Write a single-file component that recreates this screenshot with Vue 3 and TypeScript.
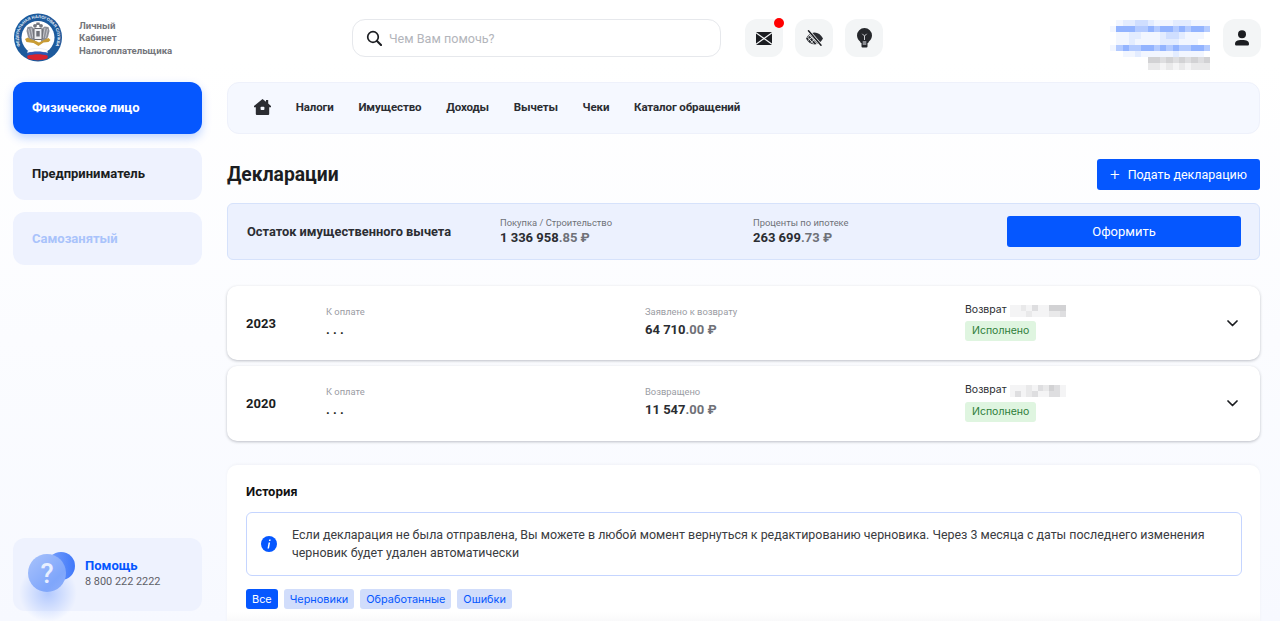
<template>
  <div class="page">
    <header class="top">
      <div class="brand">
        <svg class="logo" viewBox="0 0 48 50" width="48" height="50">
          <defs>
            <path id="ring" d="M7.500 35 A19.500 19.500 0 1 1 40.500 35" />
          </defs>
          <circle cx="24" cy="24.500" r="24" fill="#1d5a9c" />
          <circle cx="24" cy="24.500" r="16.500" fill="#fff" />
          <text class="logo-text"><textPath href="#ring" startOffset="50%" text-anchor="middle">ФЕДЕРАЛЬНАЯ НАЛОГОВАЯ СЛУЖБА</textPath></text>
          <!-- eagle: wings, heads, shield -->
          <path d="M20.500 16l-3-2.500-4 .5-1 4 1.500 6 2.500 4 4.500 1.500z" fill="#8b8e96" />
          <path d="M27.500 16l3-2.500 4 .5 1 4-1.500 6-2.500 4-4.500 1.500z" fill="#8b8e96" />
          <path d="M14.500 16l2 9M17 15l2 10M33.500 16l-2 9M31 15l-2 10" stroke="#dcdee3" stroke-width=".7" />
          <circle cx="21" cy="12.800" r="1.900" fill="#74777f" />
          <circle cx="27" cy="12.800" r="1.900" fill="#74777f" />
          <path d="M22.500 9.500h3l.5 2.500h-4z" fill="#74777f" />
          <rect x="20" y="15.500" width="8" height="11" rx="1" fill="#eceef1" stroke="#55575e" stroke-width=".9" />
          <rect x="22.300" y="18" width="3.400" height="5.500" fill="#6d7078" />
          <!-- key -->
          <path d="M11 26l3-1.500 2 1.500 6 2 3 1.500 7-3.500 2.500-1 2 2-2 2-5 .5-5 3.500-5-3-7-1z" fill="#c99c34" />
          <!-- flag ribbon -->
          <path d="M14 37c6-2.200 13-2.200 19 0l.5 3c-6-2-14-2-20 0z" fill="#fff" stroke="#d5dbe6" stroke-width=".4" />
          <path d="M13.500 40c6-2 14-2 20 0l.3 2.800c-6-2-14-2-20.500 0z" fill="#2f58b5" />
          <path d="M13.300 42.800c6.500-2 14.500-2 20.500 0l-.3 2.700c-6 2.300-14 2.300-20 0z" fill="#d8232f" />
        </svg>
        <div class="brand-text">Личный<br />Кабинет<br />Налогоплательщика</div>
      </div>

      <div class="search">
        <svg width="16" height="16" viewBox="0 0 16 16" fill="none" stroke="#1b1d21" stroke-width="1.700">
          <circle cx="7" cy="7" r="5.300" />
          <path d="M11 11l4 4" stroke-width="2.200" stroke-linecap="round" />
        </svg>
        <span>Чем Вам помочь?</span>
      </div>

      <div class="actions">
        <button class="icon-btn">
          <svg width="16" height="13" viewBox="0 0 16 13">
            <rect width="16" height="13" rx="1" fill="#1b1d21" />
            <path d="M0 .8L16 12.200M16 .8L0 12.200" fill="none" stroke="#f3f5f6" stroke-width="1.200" />
          </svg>
          <i class="dot"></i>
        </button>
        <button class="icon-btn">
          <svg width="19" height="16" viewBox="0 0 19 16">
            <path d="M1 8.500c2-3.800 5-6 8.500-6s6.500 2.200 8.500 6c-2 3.800-5 6-8.500 6S3 12.300 1 8.500z" fill="#2b2d32" />
            <path d="M2.500 7l6.500 7.500M4.500 5.200l8 9.300M7 4l-3.800 2.500M3 10.500l6-5M5.500 13l5.500-5" stroke="#f3f5f6" stroke-width=".9" />
            <path d="M3.500 .8l12.500 14.400" stroke="#f3f5f6" stroke-width="3" />
            <path d="M3.500 .8l12.500 14.400" stroke="#1b1d21" stroke-width="1.500" stroke-linecap="round" />
          </svg>
        </button>
        <button class="icon-btn">
          <svg width="15" height="20" viewBox="0 0 15 20">
            <path d="M7.500 0a7.500 7.500 0 0 1 7.500 7.500c0 2.800-1.500 4.300-2.800 5.800-.7.800-.9 1.300-.9 1.700H3.700c0-.4-.2-.9-.9-1.700C1.500 11.800 0 10.300 0 7.500A7.500 7.500 0 0 1 7.500 0z" fill="#25272b" />
            <path d="M5.300 5.800l2.200 2.200 2.200-2.200M7.500 8v6" fill="none" stroke="#c9cbd0" stroke-width="1" />
            <rect x="4.500" y="12" width="6" height="7.500" rx="1" fill="#25272b" />
            <rect x="5.700" y="13" width="3.600" height="4" fill="#8a8c91" />
          </svg>
        </button>
      </div>

      <div class="profile">
        <div class="pix pix-blue">
          <i
            v-for="(cell, i) in profileCells"
            :key="i"
            :style="{ background: cell }"
          ></i>
        </div>
        <button class="icon-btn">
          <svg width="16" height="16" viewBox="0 0 16 16" fill="#1b1d21">
            <circle cx="8" cy="4.200" r="4" />
            <path d="M1 14c0-2.600 2-4 7-4s7 1.400 7 4c0 1-.6 1.600-1.600 1.600H2.600C1.600 15.600 1 15 1 14z" />
          </svg>
        </button>
      </div>
    </header>

    <div class="body">
      <aside class="side">
        <a class="side-item active">Физическое лицо</a>
        <a class="side-item second">Предприниматель</a>
        <a class="side-item muted">Самозанятый</a>
        <div class="help">
          <div class="help-icon">
            <i class="glow"></i>
            <i class="back"></i>
            <i class="front">?</i>
          </div>
          <div>
            <div class="help-title">Помощь</div>
            <div class="help-phone">8 800 222 2222</div>
          </div>
        </div>
      </aside>

      <main class="main">
        <nav class="nav">
          <svg width="17" height="16" viewBox="0 0 17 16">
            <path d="M8.500 0L12 2.800V1h2.200v3.600L17 7v1.300h-1.800V15a1 1 0 0 1-1 1H2.800a1 1 0 0 1-1-1V8.300H0V7z" fill="#2b2d32" />
            <rect x="6.600" y="7.800" width="3.800" height="3.200" rx=".8" fill="#f5f8ff" />
          </svg>
          <a v-for="item in navItems" :key="item">{{ item }}</a>
        </nav>

        <div class="title-row">
          <h1>Декларации</h1>
          <button class="btn-add"><span class="plus">+</span>Подать декларацию</button>
        </div>

        <section class="remain">
          <div class="remain-title">Остаток имущественного вычета</div>
          <div>
            <div class="label">Покупка / Строительство</div>
            <div class="sum">1 336 958<em>.85 ₽</em></div>
          </div>
          <div>
            <div class="label">Проценты по ипотеке</div>
            <div class="sum">263 699<em>.73 ₽</em></div>
          </div>
          <button class="btn-issue">Оформить</button>
        </section>

        <div class="rows">
          <article v-for="row in rows" :key="row.year" class="row">
            <div class="year">{{ row.year }}</div>
            <div class="cell">
              <div class="label light">К оплате</div>
              <div class="dots">. . .</div>
            </div>
            <div class="cell">
              <div class="label light">{{ row.label }}</div>
              <div class="sum row-sum">{{ row.sum }}<em>.00 ₽</em></div>
            </div>
            <div class="refund-col">
              <div class="refund">
                Возврат
                <span class="pix pix-grey">
                  <i
                    v-for="(cell, i) in row.cells"
                    :key="i"
                    :style="{ background: cell }"
                  ></i>
                </span>
              </div>
              <span class="status">Исполнено</span>
            </div>
            <svg width="11" height="7" viewBox="0 0 11 7" fill="none" stroke="#1b1d21" stroke-width="1.700" stroke-linecap="round" stroke-linejoin="round">
              <path d="M1 1l4.500 4.500L10 1" />
            </svg>
          </article>
        </div>

        <section class="history">
          <h2>История</h2>
          <div class="info">
            <svg width="16" height="16" viewBox="0 0 16 16">
              <circle cx="8" cy="8" r="8" fill="#0557ff" />
              <path d="M8.200 3.400h1.500l-.3 1.500H7.900zM7.600 6.400h1.500L8 12.400H6.500z" fill="#fff" />
            </svg>
            <p>Если декларация не была отправлена, Вы можете в любой момент вернуться к редактированию черновика. Через 3 месяца с даты последнего изменения черновик будет удален автоматически</p>
          </div>
          <div class="tags">
            <span class="tag on">Все</span>
            <span class="tag">Черновики</span>
            <span class="tag">Обработанные</span>
            <span class="tag">Ошибки</span>
          </div>
          <div class="fade"></div>
        </section>
      </main>
    </div>
  </div>
</template>

<script setup lang="ts">
const navItems = ['Налоги', 'Имущество', 'Доходы', 'Вычеты', 'Чеки', 'Каталог обращений']

// blurred personal data, drawn as mosaic cells
const blueShades = ['#ffffff', '#f2f6ff', '#e3ecff', '#cfdeff', '#b4cbff', '#93b4ff']
const greyShades = ['#ffffff', '#f4f4f5', '#e9e9ea', '#dedee0', '#d2d2d4']

const profileMap = [
  '0122332111222111',
  '1555445455454554',
  '0112211123321110',
  '0112111122211100',
  '1454455454544554',
  '0011211111211110',
]
const profileGrey = [
  '0000004434343434',
  '0000002212121222',
]

const profileCells: string[] = [
  ...profileMap.flatMap((r) => r.split('').map((c) => blueShades[Number(c)])),
  ...profileGrey.flatMap((r) => r.split('').map((c) => greyShades[Number(c)])),
]

function cellsFrom(map: string[]) {
  return map.flatMap((r) => r.split('').map((c) => greyShades[Number(c)]))
}

const rows = [
  {
    year: 2023,
    label: 'Заявлено к возврату',
    sum: '64 710',
    cells: cellsFrom(['1121311444', '1112111223']),
  },
  {
    year: 2020,
    label: 'Возвращено',
    sum: '11 547',
    cells: cellsFrom(['1112132431', '1312311331']),
  },
]
</script>

<style>
html,
body {
  margin: 0;
  background: #fff;
}
</style>

<style scoped>
.page {
  height: 100vh;
  overflow: hidden;
  display: flex;
  flex-direction: column;
  box-sizing: border-box;
  font-family: Roboto, "Noto Sans", sans-serif;
  color: #1b1d21;
  background: linear-gradient(180deg, #fff 0, #fff 60px, #f7f9ff 100%);
}

button {
  font-family: inherit;
  border: none;
  cursor: pointer;
}

.top {
  flex: none;
  height: 82px;
  display: flex;
  align-items: flex-start;
  box-sizing: border-box;
  padding: 13px 19px 0 14px;
}

.brand {
  width: 338px;
  flex: none;
  display: flex;
  align-items: center;
  gap: 17px;
}

.logo {
  display: block;
}

.logo-text {
  font: 700 4.100px "Liberation Sans", sans-serif;
  fill: #eaf1fa;
}

.brand-text {
  margin-top: 1px;
  font-size: 9.600px;
  font-weight: 700;
  line-height: 12.500px;
  color: #74767c;
}

.search {
  margin-top: 6px;
  width: 369px;
  height: 38px;
  box-sizing: border-box;
  border: 1px solid #e6e8ec;
  border-radius: 13px;
  background: #fff;
  display: flex;
  align-items: center;
  gap: 7px;
  padding-left: 13px;
  font-size: 12.600px;
  color: #b3b5bb;
}

.actions {
  margin: 6px 0 0 24px;
  display: flex;
  gap: 12px;
}

.icon-btn {
  position: relative;
  width: 38px;
  height: 38px;
  padding: 0;
  border-radius: 12px;
  background: #f3f5f6;
  display: flex;
  align-items: center;
  justify-content: center;
}

.dot {
  position: absolute;
  top: -1px;
  right: -1px;
  width: 10px;
  height: 10px;
  border-radius: 50%;
  background: #ff0000;
}

.profile {
  margin: 6px 0 0 auto;
  display: flex;
  gap: 13px;
}

.pix {
  display: grid;
}

.pix i {
  display: block;
}

.pix-blue {
  margin-top: 1px;
  width: 100px;
  grid-template-columns: repeat(16, 6.250px);
  grid-auto-rows: 6.200px;
}

.pix-grey {
  width: 56px;
  margin-top: 3px;
  grid-template-columns: repeat(10, 5.600px);
  grid-auto-rows: 6px;
}

.body {
  flex: 1;
  min-height: 0;
  display: flex;
  gap: 25px;
  padding: 0 20px 10px 13px;
}

.side {
  width: 189px;
  flex: none;
  display: flex;
  flex-direction: column;
}

.side-item {
  height: 52px;
  margin-bottom: 14px;
  padding: 0 0 2px 19px;
  box-sizing: border-box;
  display: flex;
  align-items: center;
  border-radius: 12px;
  background: #eef2fe;
  font-size: 13px;
  font-weight: 700;
}

.side-item.second {
  margin-bottom: 12px;
}

.side-item.active {
  background: #0557ff;
  color: #fff;
  box-shadow: 0 4px 10px rgba(5, 87, 255, 0.25);
}

.side-item.muted {
  height: 53px;
  padding-bottom: 1px;
  color: #a9c3fb;
}

.help {
  margin-top: auto;
  height: 73px;
  border-radius: 12px;
  background: #eef2fe;
  display: flex;
  align-items: center;
  gap: 17px;
  padding-left: 15px;
}

.help-icon {
  position: relative;
  width: 40px;
  height: 40px;
  margin-top: 4px;
}

.help-icon i {
  position: absolute;
  border-radius: 50%;
}

.glow {
  left: -10px;
  top: 6px;
  width: 60px;
  height: 60px;
  background: radial-gradient(circle, rgba(90, 140, 255, 0.4), rgba(90, 140, 255, 0) 68%);
}

.back {
  left: 19px;
  top: -5px;
  width: 28px;
  height: 28px;
  background: linear-gradient(90deg, #7ba2fb, #3f78fa);
}

.front {
  left: 0;
  top: -3px;
  width: 38px;
  height: 38px;
  background: linear-gradient(135deg, #a9c3fb, #7fa6fb 70%, #8fb0fa);
  color: #e8efff;
  font-style: normal;
  font-size: 27px;
  font-weight: 500;
  line-height: 40px;
  text-align: center;
}

.help-title {
  margin-top: -4px;
  font-size: 13px;
  font-weight: 700;
  color: #0557ff;
  margin-bottom: 2px;
}

.help-phone {
  font-size: 10.900px;
  color: #5e6067;
}

.main {
  flex: 1;
  min-width: 0;
}

.nav {
  height: 52px;
  box-sizing: border-box;
  border: 1px solid #eef1fb;
  border-radius: 12px;
  background: #f5f8ff;
  display: flex;
  align-items: center;
  gap: 24.700px;
  padding: 0 0 2px 26px;
  margin-bottom: 25px;
}

.nav a {
  font-size: 11.500px;
  font-weight: 700;
  letter-spacing: -0.1px;
  color: #2b2d32;
}

.title-row {
  height: 31px;
  display: flex;
  align-items: center;
  justify-content: space-between;
  margin-bottom: 13px;
}

h1 {
  margin: -1px 0 0;
  font-size: 19.300px;
  font-weight: 700;
}

.btn-add {
  width: 163px;
  height: 31px;
  border-radius: 3px;
  background: #0557ff;
  color: #fff;
  font-size: 12.500px;
  display: flex;
  align-items: center;
  justify-content: center;
  gap: 8px;
}

.plus {
  font-size: 17px;
  font-weight: 300;
  line-height: 1;
}

.remain {
  height: 57px;
  box-sizing: border-box;
  border: 1px solid #d6e2fb;
  border-radius: 6px;
  background: #ecf1fe;
  display: grid;
  grid-template-columns: 253px 253px 1fr 234px;
  align-items: center;
  padding: 0 18px 0 19px;
  margin-bottom: 26px;
}

.remain-title {
  font-size: 12.800px;
  font-weight: 700;
  color: #2b2d32;
}

.label {
  font-size: 9.400px;
  line-height: 12px;
  color: #6f7178;
  margin-bottom: 1px;
}

.label.light {
  color: #9a9ca3;
}

.sum {
  font-size: 13px;
  font-weight: 700;
  line-height: 16px;
  color: #2b2d32;
}

.cell {
  padding-bottom: 3px;
}

.row-sum {
  margin-top: 4px;
}

.sum em {
  font-style: normal;
  color: #6f7178;
}

.btn-issue {
  height: 31px;
  border-radius: 3px;
  background: #0557ff;
  color: #fff;
  font-size: 13px;
}

.rows {
  display: flex;
  flex-direction: column;
  gap: 6px;
  margin-bottom: 24px;
}

.row {
  height: 75px;
  box-sizing: border-box;
  border-radius: 10px;
  background: #fff;
  box-shadow: 0 1px 3px rgba(30, 35, 50, 0.28);
  display: grid;
  grid-template-columns: 80px 319px 320px 1fr 11px;
  align-items: center;
  padding: 0 22px 0 19px;
}

.row:first-child {
  height: 74px;
}

.year {
  font-size: 13px;
  font-weight: 700;
}

.dots {
  font-size: 13px;
  font-weight: 700;
  line-height: 16px;
  margin-top: 4px;
}

.refund-col {
  padding-bottom: 3px;
}

.refund {
  display: flex;
  align-items: center;
  gap: 3px;
  height: 14px;
  font-family: Inter, Roboto, sans-serif;
  font-size: 10.500px;
  color: #2b2d32;
  margin-bottom: 5px;
}

.status {
  display: block;
  width: fit-content;
  height: 20px;
  line-height: 20px;
  padding: 0 7px;
  border-radius: 3px;
  background: #dff5e0;
  color: #2e7d3a;
  font-family: Inter, Roboto, sans-serif;
  font-size: 10.500px;
}

.history {
  border-radius: 10px 10px 0 0;
  background: #fff;
  padding: 19px 18px 0 19px;
  height: 200px;
  box-shadow: 0 -1px 3px rgba(30, 35, 50, 0.04);
}

h2 {
  margin: 0 0 12px;
  font-family: Inter, Roboto, sans-serif;
  font-size: 12px;
  font-weight: 700;
  line-height: 16px;
  color: #111;
}

.info {
  height: 64px;
  box-sizing: border-box;
  border: 1px solid #c5d5ff;
  border-radius: 6px;
  display: flex;
  align-items: center;
  gap: 15px;
  padding: 0 20px 0 14px;
  margin-bottom: 13px;
}

.info svg {
  flex: none;
}

.info p {
  margin: 0;
  font-size: 12.430px;
  line-height: 18.500px;
  color: #3a3c41;
}

.tags {
  display: flex;
  gap: 6px;
}

.tag {
  height: 20px;
  line-height: 20px;
  padding: 0 6px;
  border-radius: 3px;
  background: #d1ddfb;
  color: #0557ff;
  font-family: Inter, Roboto, sans-serif;
  font-size: 10.900px;
}

.tag.on {
  background: #0557ff;
  color: #fff;
}

.fade {
  height: 16px;
  margin: 3px -18px 0 -19px;
  background: linear-gradient(180deg, #fff, #f5f5f7);
}
</style>
